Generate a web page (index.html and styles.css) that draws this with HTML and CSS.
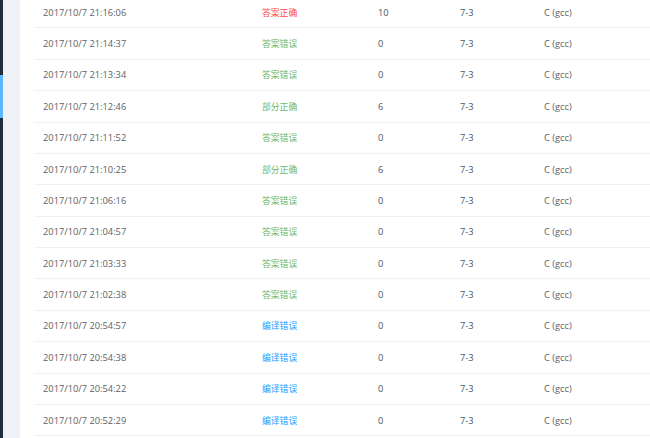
FILE: index.html
```html
<!DOCTYPE html>
<html>
<head>
<meta charset="utf-8">
<link rel="stylesheet" href="styles.css">
</head>
<body>
<div class="app">
  <div class="sidebar"><div class="active"></div></div>
  <div class="gutter"></div>
  <div class="main">
    <div class="table">
      <div class="row"><div class="c time">2017/10/7 21:16:06</div><div class="c st red">答案正确</div><div class="c score">10</div><div class="c prob">7-3</div><div class="c comp">C (gcc)</div></div>
      <div class="row"><div class="c time">2017/10/7 21:14:37</div><div class="c st green">答案错误</div><div class="c score">0</div><div class="c prob">7-3</div><div class="c comp">C (gcc)</div></div>
      <div class="row"><div class="c time">2017/10/7 21:13:34</div><div class="c st green">答案错误</div><div class="c score">0</div><div class="c prob">7-3</div><div class="c comp">C (gcc)</div></div>
      <div class="row"><div class="c time">2017/10/7 21:12:46</div><div class="c st green">部分正确</div><div class="c score">6</div><div class="c prob">7-3</div><div class="c comp">C (gcc)</div></div>
      <div class="row"><div class="c time">2017/10/7 21:11:52</div><div class="c st green">答案错误</div><div class="c score">0</div><div class="c prob">7-3</div><div class="c comp">C (gcc)</div></div>
      <div class="row"><div class="c time">2017/10/7 21:10:25</div><div class="c st green">部分正确</div><div class="c score">6</div><div class="c prob">7-3</div><div class="c comp">C (gcc)</div></div>
      <div class="row"><div class="c time">2017/10/7 21:06:16</div><div class="c st green">答案错误</div><div class="c score">0</div><div class="c prob">7-3</div><div class="c comp">C (gcc)</div></div>
      <div class="row"><div class="c time">2017/10/7 21:04:57</div><div class="c st green">答案错误</div><div class="c score">0</div><div class="c prob">7-3</div><div class="c comp">C (gcc)</div></div>
      <div class="row"><div class="c time">2017/10/7 21:03:33</div><div class="c st green">答案错误</div><div class="c score">0</div><div class="c prob">7-3</div><div class="c comp">C (gcc)</div></div>
      <div class="row"><div class="c time">2017/10/7 21:02:38</div><div class="c st green">答案错误</div><div class="c score">0</div><div class="c prob">7-3</div><div class="c comp">C (gcc)</div></div>
      <div class="row"><div class="c time">2017/10/7 20:54:57</div><div class="c st blue">编译错误</div><div class="c score">0</div><div class="c prob">7-3</div><div class="c comp">C (gcc)</div></div>
      <div class="row"><div class="c time">2017/10/7 20:54:38</div><div class="c st blue">编译错误</div><div class="c score">0</div><div class="c prob">7-3</div><div class="c comp">C (gcc)</div></div>
      <div class="row"><div class="c time">2017/10/7 20:54:22</div><div class="c st blue">编译错误</div><div class="c score">0</div><div class="c prob">7-3</div><div class="c comp">C (gcc)</div></div>
      <div class="row"><div class="c time">2017/10/7 20:52:29</div><div class="c st blue">编译错误</div><div class="c score">0</div><div class="c prob">7-3</div><div class="c comp">C (gcc)</div></div>
    </div>
  </div>
</div>
</body>
</html>
```
FILE: styles.css
```css
html, body {
  margin: 0;
  padding: 0;
  background: #fff;
  overflow: hidden;
}
body {
  font-family: "Open Sans", "Noto Sans CJK SC", sans-serif;
  font-size: 9.3px;
  color: #555;
}
.app {
  display: flex;
  height: 438px;
}
.sidebar {
  width: 3px;
  background: #1f2d3d;
  padding-top: 75px;
  box-sizing: border-box;
}
.active {
  height: 43px;
  background: #58b7ff;
}
.gutter {
  width: 17px;
  background: #eef1f6;
}
.main {
  flex: 1;
  padding-left: 14px;
  overflow: hidden;
}
.table {
  margin-top: -3px;
}
.row {
  display: grid;
  grid-template-columns: 219px 116px 82px 84px 1fr;
  height: 31.38px;
  box-sizing: border-box;
  border-bottom: 1px solid #eef1f6;
  align-items: center;
}
.c {
  padding-left: 9px;
  white-space: nowrap;
}
.time { color: #5e6166; }
.st { font-size: 8.8px; }
.red { color: #ff4949; }
.green { color: #6bb86b; }
.blue { color: #20a0ff; }
.score { color: #48576a; }
.prob { color: #48576a; }
.comp { color: #5e6166; }
```
